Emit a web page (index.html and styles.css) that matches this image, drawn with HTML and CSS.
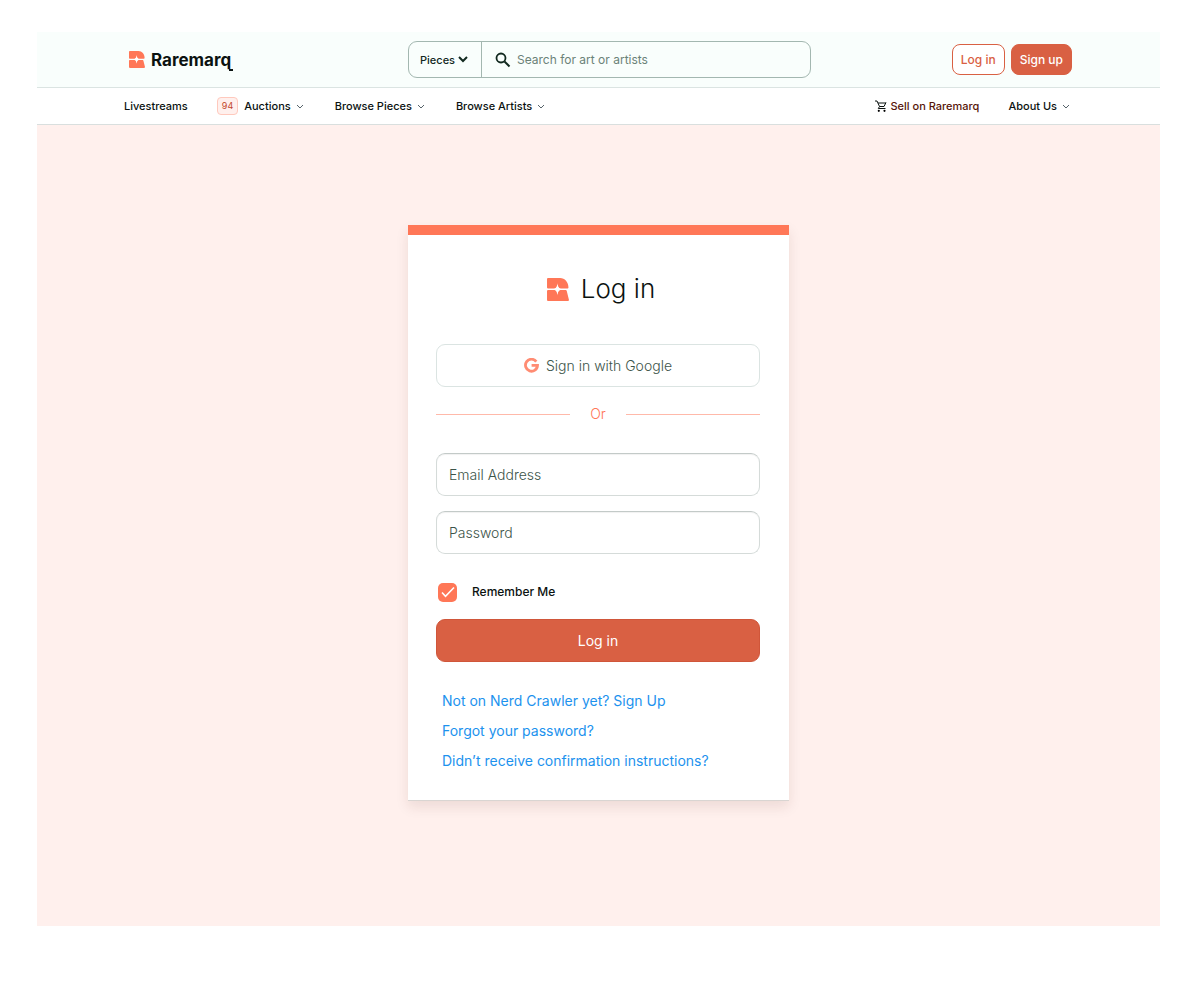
FILE: index.html
```html
<!DOCTYPE html>
<html lang="en">
<head>
    <meta charset="UTF-8">
    <meta name="viewport" content="width=device-width, initial-scale=1.0">
    <title>Log in | Raremarq</title>
    <link rel="stylesheet" href="styles.css">
</head>
<body>
    <!-- Shared shapes -->
    <svg class="sprite" aria-hidden="true">
        <symbol id="mark" viewBox="0 0 42 44">
            <path d="M2 0H25C34 0 41 8 41 18C41 19 40 20 39 20H26C22 20 21 18 20 13C19 18 18 20 14 20H2Q0 20 0 18V2Q0 0 2 0Z"></path>
            <path d="M2 23H14C18 23 19 26 20 31C21 26 22 23 26 23H35C37 23 38 24 38 26L42 42Q42 44 40 44H2Q0 44 0 42V25Q0 23 2 23Z"></path>
            <path fill="#ffffff" d="M20 10C21 18 23 20 28 21.500C23 23 21 25 20 33C19 25 17 23 12 21.500C17 20 19 18 20 10Z"></path>
        </symbol>
        <symbol id="chevron" viewBox="0 0 12 12">
            <path fill="none" stroke="currentColor" d="M3 5L6 8L9 5"></path>
        </symbol>
    </svg>

    <header class="header">
        <a class="logo" href="#">
            <svg class="logo-mark" aria-hidden="true"><use href="#mark"></use></svg>
            <span class="logo-text">Raremarq</span>
        </a>

        <form class="search">
            <div class="search-type">
                <select aria-label="Search type">
                    <option>Pieces</option>
                    <option>Artists</option>
                </select>
                <svg width="10" height="8" viewBox="0 0 10 8" aria-hidden="true">
                    <path fill="none" stroke="currentColor" stroke-width="2" d="M1 1L5 5L9 1"></path>
                </svg>
            </div>
            <svg class="search-icon" width="16" height="16" viewBox="0 0 16 16" aria-hidden="true">
                <circle cx="6" cy="6" r="4.500" fill="none" stroke="currentColor" stroke-width="1.800"></circle>
                <path fill="none" stroke="currentColor" stroke-width="2" d="M9.500 9.500L14.500 14.500"></path>
            </svg>
            <input type="text" aria-label="Search" placeholder="Search for art or artists">
        </form>

        <div class="header-actions">
            <button type="button" class="small-button outline">Log in</button>
            <button type="button" class="small-button">Sign up</button>
        </div>
    </header>

    <nav class="nav">
        <a href="#">Livestreams</a>
        <a href="#"><span class="badge">94</span>Auctions <svg class="chevron" aria-hidden="true"><use href="#chevron"></use></svg></a>
        <a href="#">Browse Pieces <svg class="chevron" aria-hidden="true"><use href="#chevron"></use></svg></a>
        <a href="#">Browse Artists <svg class="chevron" aria-hidden="true"><use href="#chevron"></use></svg></a>
        <a class="sell" href="#">
            <svg class="cart" width="12" height="12" viewBox="0 0 12 12" aria-hidden="true">
                <path fill="none" stroke="currentColor" d="M0 1H2L4.500 6.500H9L11 2.500M3 3H11M4.500 6.500L3.300 8.500H10.500"></path>
                <circle cx="3.800" cy="10.800" r="1.100"></circle>
                <circle cx="9.500" cy="10.800" r="1.100"></circle>
            </svg>
            Sell on Raremarq
        </a>
        <a href="#">About Us <svg class="chevron" aria-hidden="true"><use href="#chevron"></use></svg></a>
    </nav>

    <main class="main">
        <div class="login-card">
            <div class="login-title">
                <svg class="title-mark" aria-hidden="true"><use href="#mark"></use></svg>
                <h1>Log in</h1>
            </div>

            <button type="button" class="google-button">
                <svg width="15" height="15" viewBox="0 0 15 15" aria-hidden="true">
                    <path fill="none" stroke="#ff8c73" stroke-width="2.800" d="M12.300 3.600A6 6 0 1 0 13.500 7.400H7.600"></path>
                </svg>
                Sign in with Google
            </button>

            <div class="divider">Or</div>

            <form class="login-form">
                <input type="email" class="field" aria-label="Email Address" placeholder="Email Address">
                <input type="password" class="field" aria-label="Password" placeholder="Password">

                <div class="remember">
                    <span class="checkbox">
                        <input type="checkbox" id="remember" checked>
                        <svg width="14" height="12" viewBox="0 0 14 12" aria-hidden="true">
                            <path fill="none" stroke="#ffffff" stroke-width="1.600" d="M1 6.500L4.500 10.300L13 1.500"></path>
                        </svg>
                    </span>
                    <label for="remember">Remember Me</label>
                </div>

                <button type="submit" class="login-button">Log in</button>
            </form>

            <div class="links">
                <a href="#">Not on Nerd Crawler yet? Sign Up</a>
                <a href="#">Forgot your password?</a>
                <a href="#">Didn’t receive confirmation instructions?</a>
            </div>
        </div>
    </main>
</body>
</html>
```

FILE: styles.css
```css
* {
    box-sizing: border-box;
}

body {
    display: flex;
    flex-direction: column;
    min-height: 100vh;
    margin: 0;
    padding: 32px 40px 59px 37px;
    background-color: #ffffff;
    font-family: Inter, "Liberation Sans", sans-serif;
    font-size: 14px;
    color: #0b1210;
}

a {
    color: inherit;
    text-decoration: none;
}

button,
input,
select {
    font-family: inherit;
    font-size: inherit;
}

button {
    cursor: pointer;
}

.sprite {
    display: none;
}

/* Header */
.header {
    display: flex;
    align-items: center;
    height: 56px;
    padding: 0 88px 0 87px;
    background-color: #f9fefc;
    border-bottom: 1px solid #dbe4e2;
}

.logo {
    display: flex;
    align-items: center;
    gap: 6px;
    flex: 0 0 284px;
    padding-left: 5px;
}

.logo-mark {
    width: 16px;
    height: 17px;
    fill: #ff7757;
}

.logo-text {
    position: relative;
    font-size: 17px;
    font-weight: 700;
    line-height: 24px;
}

/* Tail of the q */
.logo-text::after {
    content: "";
    position: absolute;
    right: -2px;
    bottom: 1px;
    width: 4px;
    height: 2px;
    background-color: #0b1210;
}

.search {
    display: flex;
    align-items: center;
    flex: 0 1 403px;
    height: 37px;
    border: 1px solid #a3b7b0;
    border-radius: 9px;
    color: #12291f;
}

.search-type {
    position: relative;
    display: flex;
    align-items: center;
    align-self: stretch;
    width: 73px;
    border-right: 1px solid #a3b7b0;
}

.search-type select {
    width: 100%;
    height: 100%;
    padding: 0 0 0 11px;
    border: 0;
    background: none;
    appearance: none;
    font-size: 11px;
    font-weight: 500;
    color: inherit;
}

.search-type svg {
    position: absolute;
    right: 13px;
    pointer-events: none;
}

.search-icon {
    margin: 0 6px 0 13px;
}

.search input {
    flex: 1;
    min-width: 0;
    padding: 0;
    border: 0;
    background: none;
    font-size: 12px;
}

.search input::placeholder {
    color: #6b8278;
    opacity: 1;
}

.header-actions {
    display: flex;
    gap: 6px;
    margin-left: auto;
}

.small-button {
    height: 31px;
    padding: 0 8px;
    border: 1px solid #d96043;
    border-radius: 8px;
    background-color: #d96043;
    font-size: 12px;
    font-weight: 500;
    color: #ffffff;
}

.small-button.outline {
    background-color: #ffffff;
    color: #d96043;
}

/* Navigation */
.nav {
    display: flex;
    align-items: center;
    gap: 29px;
    height: 37px;
    padding: 0 88px 0 87px;
    border-bottom: 1px solid #d9dfde;
    font-size: 11px;
    font-weight: 500;
}

.nav a {
    display: flex;
    align-items: center;
    gap: 3px;
}

.badge {
    margin-right: 3px;
    padding: 0 4px;
    border: 1px solid #ffc9bd;
    border-radius: 4px;
    background-color: #fff0ed;
    font-size: 9px;
    font-weight: 400;
    line-height: 16px;
    color: #c2452a;
}

.chevron {
    width: 12px;
    height: 12px;
    color: #56636a;
}

.nav .sell {
    margin-left: auto;
    color: #561509;
}

.cart {
    color: #0b1210;
}

/* Main */
.main {
    flex: 1;
    padding: 100px 20px;
    background-color: #fff0ed;
}

.login-card {
    max-width: 381px;
    margin: 0 auto;
    padding: 34px 29px 24px 28px;
    border-top: 10px solid #ff7757;
    border-bottom: 1px solid #d9d5d2;
    background-color: #ffffff;
    box-shadow: 0 6px 12px rgba(80, 30, 20, 0.1);
}

.login-title {
    display: flex;
    justify-content: center;
    align-items: center;
    gap: 12px;
    margin-bottom: 35px;
    padding-left: 6px;
}

.title-mark {
    width: 22px;
    height: 23px;
    fill: #ff7757;
}

.login-title h1 {
    margin: 0;
    font-size: 26px;
    font-weight: 300;
    line-height: 40px;
}

.google-button {
    display: flex;
    justify-content: center;
    align-items: center;
    gap: 7px;
    width: 100%;
    height: 43px;
    border: 1px solid #dbe4e2;
    border-radius: 9px;
    background-color: #ffffff;
    font-weight: 300;
    color: #3c5449;
}

.divider {
    display: flex;
    align-items: center;
    gap: 20px;
    margin: 17px 0 29px;
    font-weight: 300;
    line-height: 20px;
    color: #ff7757;
}

.divider::before,
.divider::after {
    content: "";
    flex: 1;
    height: 1px;
    background-color: #ffb9aa;
}

/* Form */
.login-form {
    display: flex;
    flex-direction: column;
}

.field {
    width: 100%;
    height: 43px;
    margin-bottom: 15px;
    padding: 0 12px;
    border: 1px solid #d5dbd9;
    border-top-color: #c3cac8;
    border-radius: 9px;
    background-color: #ffffff;
    box-shadow: inset 0 1px 1px rgba(0, 0, 0, 0.06);
    font-weight: 300;
}

.field::placeholder {
    color: #3c5449;
    opacity: 1;
}

.remember {
    display: flex;
    align-items: center;
    gap: 15px;
    margin: 13px 0 17px;
    padding-left: 2px;
    font-size: 12px;
    font-weight: 500;
    line-height: 20px;
}

.checkbox {
    display: grid;
    place-items: center;
}

.checkbox input,
.checkbox svg {
    grid-area: 1 / 1;
}

.checkbox input {
    width: 19px;
    height: 19px;
    margin: 0;
    border-radius: 5px;
    background-color: #ff7757;
    appearance: none;
}

.checkbox svg {
    z-index: 1;
    pointer-events: none;
}

.login-button {
    height: 43px;
    border: 1px solid #d0563a;
    border-radius: 9px;
    background-color: #d96043;
    font-weight: 400;
    color: #ffffff;
}

/* Links */
.links {
    display: flex;
    flex-direction: column;
    align-items: flex-start;
    margin-top: 24px;
    padding-left: 6px;
    line-height: 30px;
    color: #1c92ee;
}
```
